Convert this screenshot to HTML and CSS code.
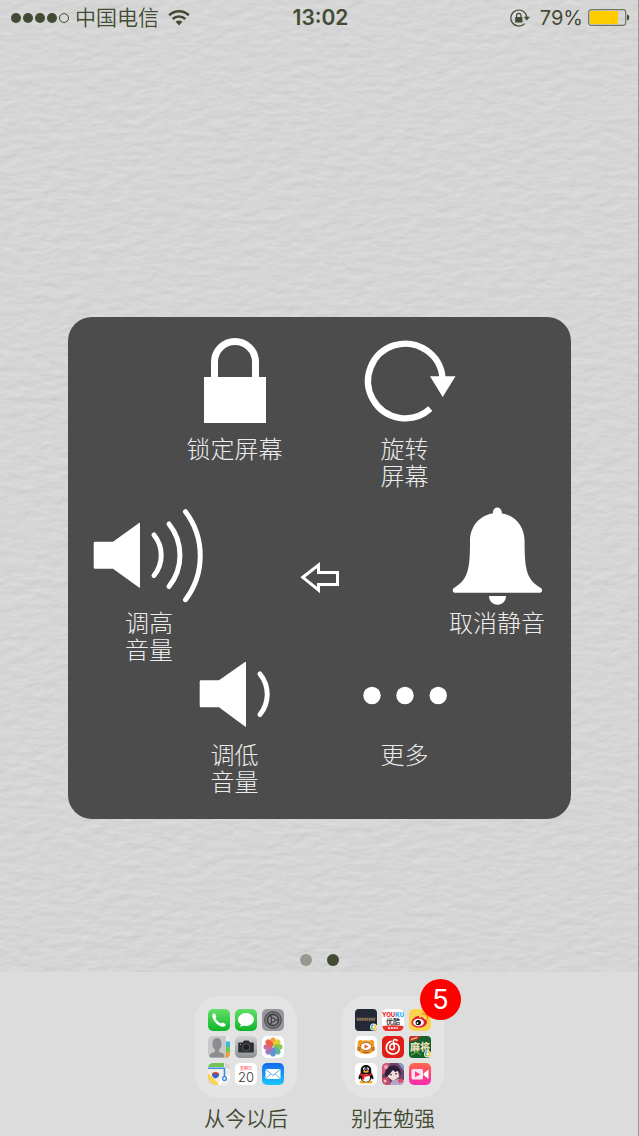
FILE: index.html
```html
<!DOCTYPE html>
<html lang="zh-CN">
<head>
    <meta charset="UTF-8">
    <meta name="viewport" content="width=device-width, initial-scale=1.0">
    <title>AssistiveTouch</title>
    <link rel="stylesheet" href="styles.css">
</head>
<body>
    <div class="screen">
        <!-- paper wallpaper -->
        <svg class="wallpaper" aria-hidden="true">
            <filter id="paper" x="0" y="0" width="100%" height="100%" color-interpolation-filters="sRGB">
                <feTurbulence type="fractalNoise" baseFrequency="0.06 0.13" numOctaves="3" seed="4"/>
                <feDiffuseLighting surfaceScale="0.22" diffuseConstant="1" lighting-color="#f9f9f9">
                    <feDistantLight azimuth="70" elevation="59"/>
                </feDiffuseLighting>
            </filter>
            <rect width="100%" height="100%" filter="url(#paper)"/>
        </svg>

        <header class="status-bar">
            <div class="status-left">
                <div class="signal">
                    <i></i><i></i><i></i><i></i><i class="empty"></i>
                </div>
                <span class="carrier">中国电信</span>
                <svg class="wifi" width="22" height="17" viewBox="0 0 22 17">
                    <g fill="none" stroke="#424b33" stroke-width="2.6">
                        <path d="M1.2 6.2a14 14 0 0 1 19.6 0"/>
                        <path d="M4.7 10a9 9 0 0 1 12.6 0"/>
                    </g>
                    <path d="M11 16.5l-3.4-3.7a4.8 4.8 0 0 1 6.8 0z" fill="#424b33"/>
                </svg>
            </div>
            <div class="time">13:02</div>
            <div class="status-right">
                <svg width="20" height="18" viewBox="0 0 20 18">
                    <path d="M14.6 14.6A8 8 0 1 1 16.8 8" fill="none" stroke="#424b33" stroke-width="1.2"/>
                    <path d="M13.8 7.8h6.2l-3.1 3.6z" fill="#424b33"/>
                    <rect x="5.2" y="8" width="7.2" height="5.4" rx=".5" fill="#424b33"/>
                    <path d="M6.6 8.2V6.6a2.2 2.2 0 0 1 4.4 0v1.6" fill="none" stroke="#424b33" stroke-width="1.2"/>
                </svg>
                <span class="percent">79%</span>
                <svg width="42" height="17" viewBox="0 0 42 17">
                    <rect x=".7" y=".7" width="37" height="15.6" rx="2.5" fill="none" stroke="#6f755f" stroke-width="1.2"/>
                    <rect x="2" y="2" width="28" height="13" fill="#fc0"/>
                    <path d="M39 5.5c3 0 3 6 0 6z" fill="#424b33"/>
                </svg>
            </div>
        </header>

        <main class="home"></main>

        <div class="page-dots"><i></i><i class="current"></i></div>

        <footer class="dock">
            <button class="folder">
                <span class="folder-box">
                    <!-- phone -->
                    <svg viewBox="0 0 22 22"><defs><linearGradient id="green" x2="0" y2="1"><stop stop-color="#62df68"/><stop offset="1" stop-color="#0fb52b"/></linearGradient></defs>
                        <rect width="22" height="22" rx="5" fill="url(#green)"/>
                        <path d="M4.3 6.2c0-1 1.3-2.3 2.1-1.8.9.7 1.6 1.8 1.9 2.7.2.8-1.1 1.2-.8 2 .9 2.3 2.8 4.2 5 5.2.9.4 1.3-1 2.2-.8 1 .3 2.4 1.2 2.9 2 .5.9-1.1 2.2-2.1 2.2C9.7 17.6 4.3 11.3 4.3 6.2z" fill="#fff"/>
                    </svg>
                    <!-- messages -->
                    <svg viewBox="0 0 22 22"><rect width="22" height="22" rx="5" fill="url(#green)"/>
                        <ellipse cx="11" cy="10.5" rx="8" ry="6.5" fill="#fff"/><path d="M6 14c.3 1.5-.4 2.9-1.4 3.6 2 0 3.6-.6 4.6-1.8z" fill="#fff"/>
                    </svg>
                    <!-- settings -->
                    <svg viewBox="0 0 22 22"><rect width="22" height="22" rx="5" fill="#96979b"/>
                        <circle cx="11" cy="11" r="9" fill="#77787b"/>
                        <circle cx="11" cy="11" r="8.2" fill="none" stroke="#444" stroke-width="1.2" stroke-dasharray="1 .5"/>
                        <circle cx="11" cy="11" r="5.5" fill="#8d8e91" stroke="#38393b" stroke-width="1.3"/>
                        <circle cx="11" cy="11" r="2" fill="#999" stroke="#333"/>
                        <path d="M13 11h4M9.9 9.2l-2-3.5M9.9 12.8l-2 3.5" stroke="#333" stroke-width="1.2"/>
                    </svg>
                    <!-- contacts -->
                    <svg viewBox="0 0 22 22"><rect width="22" height="22" rx="5" fill="#c9c9cb"/>
                        <path d="M18 0c2.5 0 4 2 4 5v1h-4z" fill="#eee"/><path d="M18 5.5h4V11h-4z" fill="#34bdd0"/><path d="M18 11h4v5.5h-4z" fill="#71c944"/><path d="M18 16.5h4c0 3-1.5 5.5-4 5.5z" fill="#f59a2e"/>
                        <path d="M1.5 20.5c0-3 2-3.5 5-4.6.7-.4.7-1.7 0-2.6C5 12 4.5 9.6 4.500 7.500 4.500 3.500 6.500 2 9 2s4.500 1.500 4.500 5.500c0 2.100-.5 4.500-2 5.800-.7.9-.7 2.200 0 2.600 3 1.100 5 1.600 5 4.600q0 1-1 1h-13q-1 0-1-1z" fill="#8d8d8f"/>
                    </svg>
                    <!-- camera -->
                    <svg viewBox="0 0 22 22"><defs><linearGradient id="steel" x2="0" y2="1"><stop stop-color="#d2d3d5"/><stop offset="1" stop-color="#8e9094"/></linearGradient></defs>
                        <rect width="22" height="22" rx="5" fill="url(#steel)"/>
                        <path d="M4 6.500h3.500L9 4.500h4.500L15 6.500h3q.8 0 .8.800v8.400q0 .8-.8.800H4q-.8 0-.8-.8V7.300q0-.8.800-.8z" fill="#2c2d30"/>
                        <circle cx="11.200" cy="11.300" r="3.600" fill="#202124" stroke="#666" stroke-width=".8"/>
                        <circle cx="5.500" cy="8.500" r=".5" fill="#fc0"/>
                    </svg>
                    <!-- photos -->
                    <svg viewBox="0 0 22 22"><rect width="22" height="22" rx="5" fill="#fff"/>
                        <g opacity=".9">
                            <rect x="8.200" y="1.500" width="5.600" height="8.800" rx="2.800" fill="#f79a1f"/>
                            <rect x="8.200" y="1.500" width="5.600" height="8.800" rx="2.800" fill="#d9cf26" transform="rotate(45 11 11)"/>
                            <rect x="8.200" y="1.500" width="5.600" height="8.800" rx="2.800" fill="#7fbf3a" transform="rotate(90 11 11)"/>
                            <rect x="8.200" y="1.500" width="5.600" height="8.800" rx="2.800" fill="#45b594" transform="rotate(135 11 11)"/>
                            <rect x="8.200" y="1.500" width="5.600" height="8.800" rx="2.800" fill="#4f8ace" transform="rotate(180 11 11)"/>
                            <rect x="8.200" y="1.500" width="5.600" height="8.800" rx="2.800" fill="#8570b8" transform="rotate(225 11 11)"/>
                            <rect x="8.200" y="1.500" width="5.600" height="8.800" rx="2.800" fill="#c75f98" transform="rotate(270 11 11)"/>
                            <rect x="8.200" y="1.500" width="5.600" height="8.800" rx="2.800" fill="#ec4f3b" transform="rotate(315 11 11)"/>
                        </g>
                    </svg>
                    <!-- maps -->
                    <svg viewBox="0 0 22 22"><defs><clipPath id="tile"><rect width="22" height="22" rx="5"/></clipPath></defs>
                        <g clip-path="url(#tile)">
                            <path d="M0 0h22v22H0z" fill="#f1eee3"/>
                            <path d="M0 0h16v4H0z" fill="#73c253"/><path d="M17 0h5v6l-5-2z" fill="#d9d5cd"/>
                            <path d="M0 14l10 8H0z" fill="#e8c9cf"/>
                            <path d="M-1 12l12 12" stroke="#fad648" stroke-width="4"/><path d="M11 23l3-7 9-3" stroke="#fff" stroke-width="2.500" fill="none"/>
                            <path d="M0 5.200h16.500V16" stroke="#3c8cf0" stroke-width="1.600" fill="none"/>
                            <path d="M4.500 10q3-1.500 6 0c1.500 3-1 5-3 5.500C5.500 15 3 13 4.500 10z" fill="#2c66c7"/><path d="M4.500 10q3-1.500 6 0l.3 1.200H4.200z" fill="#dc3d39"/>
                            <circle cx="16.500" cy="15.500" r="1.900" fill="#fff" stroke="#2c7ae6" stroke-width="1.200"/>
                        </g>
                    </svg>
                    <!-- calendar -->
                    <svg viewBox="0 0 22 22"><rect width="22" height="22" rx="5" fill="#fff"/>
                        <text x="11" y="6.500" class="cal-week">星期日</text><text x="11" y="18.500" class="cal-day">20</text>
                    </svg>
                    <!-- mail -->
                    <svg viewBox="0 0 22 22"><defs><linearGradient id="blue" x2="0" y2="1"><stop stop-color="#1569f0"/><stop offset="1" stop-color="#1cc5fb"/></linearGradient></defs>
                        <rect width="22" height="22" rx="5" fill="url(#blue)"/>
                        <rect x="3.500" y="6" width="15" height="10" rx="1" fill="#fff"/>
                        <path d="M4 6.500l7 6 7-6M4 15.500l5-4.700M18 15.500l-5-4.700" fill="none" stroke="#3095f4" stroke-width=".8"/>
                    </svg>
                </span>
                <span class="folder-name">从今以后</span>
            </button>

            <button class="folder">
                <span class="folder-box">
                    <!-- dark game tile -->
                    <svg viewBox="0 0 22 22"><rect width="22" height="22" rx="4" fill="#232a35"/>
                        <path d="M1.500 9.500h19M2 11h18" stroke="#8d7552" stroke-width="1.500" stroke-dasharray="2 .4"/>
                        <circle cx="18.500" cy="18" r="3.500" fill="#fff"/><path d="M16.500 18a2 2 0 0 1 2-2" stroke="#3aa7ee" stroke-width="1.600" fill="none"/><path d="M18.500 16a2 2 0 0 1 0 4" stroke="#f9c928" stroke-width="1.600" fill="none"/><path d="M18.500 20a2 2 0 0 1-2-2" stroke="#71c249" stroke-width="1.600" fill="none"/>
                    </svg>
                    <!-- youku -->
                    <svg viewBox="0 0 22 22"><rect width="22" height="22" rx="5" fill="#fff"/>
                        <text x="11" y="7.500" class="youku-latin"><tspan fill="#f0282d">YOU</tspan><tspan fill="#19a9ee">KU</tspan></text>
                        <text x="11" y="14.500" class="youku-han">优酷</text>
                        <path d="M.5 17q10.500-1.500 21 0c0 3-2 5-4.500 5H5C2.500 22 .5 20 .5 17z" fill="#e8322d"/>
                        <path d="M6 19h10" stroke="#fff" stroke-width="1.600" stroke-dasharray="2 .8"/>
                    </svg>
                    <!-- weibo -->
                    <svg viewBox="0 0 22 22"><rect width="22" height="22" rx="5" fill="#fcd34f"/>
                        <path d="M2.500 13.500C2.500 10.500 7 6.300 9.500 7c1 .3 1 1.200.8 2 2-1 4.700-1 4.700 1 2 .3 3 1.600 3 3.200 0 3-3.800 5.300-8 5.300s-7.500-2-7.500-5z" fill="#e3232c"/>
                        <ellipse cx="9.500" cy="13.500" rx="5.300" ry="3.800" fill="#fff"/><circle cx="9.300" cy="13.600" r="2.700" fill="#111"/><circle cx="8.500" cy="14" r=".9" fill="#fff"/>
                        <path d="M13 5c3.500-1 6.500 2 5.500 5.500" fill="none" stroke="#f08a1d" stroke-width="1.600"/>
                    </svg>
                    <!-- tiger player -->
                    <svg viewBox="0 0 22 22"><rect width="22" height="22" rx="5" fill="#fff"/>
                        <path d="M3 5.500q2-3 4.500-.8 3.500-1 7 0Q17.500 2.500 19 5.500c.5 1.500 0 2 .3 4 1.300 5-2.800 8.500-8.300 8.500s-9.600-3.500-8.300-8.500C3 7.500 2.500 7 3 5.500z" fill="#f59b22"/>
                        <ellipse cx="11" cy="10.500" rx="5.500" ry="4" fill="#fff" stroke="#8c4a17" stroke-width=".7"/>
                        <path d="M9.500 8.300l4 2.200-4 2.200z" fill="#e9642b"/><path d="M2 12h3M1.800 14h3.500M17 12h3M16.700 14h3.500M8 16q3 1.500 6 0" stroke="#7b3d12" stroke-width=".8" fill="none"/>
                    </svg>
                    <!-- netease music -->
                    <svg viewBox="0 0 22 22"><rect width="22" height="22" rx="5" fill="#df1f17"/>
                        <path d="M9 5.300C3.800 7.200 3 13.500 6.400 16.300c3.600 3 9.600 1.800 10.700-2.700.8-3.500-1.600-6.200-5-6.200-2.800 0-4.600 2-4.300 4.200.4 2.600 4.600 2.600 4.700-.1 0-1.200-1.500-5-1.200-6.500.3-1.700 2.400-2 3.700-.7" fill="none" stroke="#fff" stroke-width="1.700" stroke-linecap="round"/>
                    </svg>
                    <!-- mahjong -->
                    <svg viewBox="0 0 22 22"><rect width="22" height="22" rx="4" fill="#17602d"/>
                        <path d="M1 0h11L8 4 0 6V3z" fill="#c93524"/><path d="M2 3.500l6-2" stroke="#fff2a0"/>
                        <text x="11" y="14.500" class="mahjong">麻将</text>
                        <path d="M2 19l6-3 4 3" stroke="#4c9b36" stroke-width="1.500" fill="none"/>
                        <circle cx="18.500" cy="18" r="3.500" fill="#fff"/><path d="M16.500 18a2 2 0 0 1 2-2" stroke="#3aa7ee" stroke-width="1.600" fill="none"/><path d="M18.500 16a2 2 0 0 1 0 4" stroke="#f9c928" stroke-width="1.600" fill="none"/><path d="M18.500 20a2 2 0 0 1-2-2" stroke="#71c249" stroke-width="1.600" fill="none"/>
                    </svg>
                    <!-- qq -->
                    <svg viewBox="0 0 22 22"><rect width="22" height="22" rx="5" fill="#fff"/>
                        <ellipse cx="7.800" cy="19.200" rx="3.300" ry="1.400" fill="#f8ab1c"/><ellipse cx="14.200" cy="19.200" rx="3.300" ry="1.400" fill="#f8ab1c"/>
                        <path d="M11 2c3.600 0 5.300 2.500 5.300 6v2c1.500 2 2.600 4 2 6-.4.700-1.300 0-1.800-1-.7 2.500-2.500 4.200-5.500 4.200S6.200 17.500 5.500 15c-.5 1-1.400 1.700-1.800 1-.6-2 .5-4 2-6V8c0-3.500 1.700-6 5.300-6z" fill="#111"/>
                        <ellipse cx="11" cy="15" rx="4" ry="3.700" fill="#fff"/><ellipse cx="9.300" cy="6" rx="1.200" ry="1.700" fill="#fff"/><ellipse cx="12.700" cy="6" rx="1.200" ry="1.700" fill="#fff"/>
                        <circle cx="9.600" cy="6.200" r=".6"/><circle cx="12.400" cy="6.200" r=".6"/>
                        <ellipse cx="11" cy="8.800" rx="3" ry="1" fill="#f8ab1c"/>
                        <path d="M5.500 10q5.500 3 11 0l.4 2q-4 2-7.500 1.800V16.500H7V13.300q-1.200-.4-2-1.300z" fill="#e61d26"/>
                    </svg>
                    <!-- anime game -->
                    <svg viewBox="0 0 22 22"><g clip-path="url(#tile)"><path d="M0 0h22v22H0z" fill="#6b4668"/>
                        <path d="M0 0h8L4 9l-4 3z" fill="#d5587b"/><path d="M16 0h6v8z" fill="#8c9bc4"/>
                        <path d="M6 8q5-5 10-1l1 7-6 4-5-4z" fill="#f6dcd8"/><path d="M3 14C2 6 7 2 12 2.500c5 .5 7 4.500 7 9.500l-3-4-3 1-2-2-4 5z" fill="#2c2038"/>
                        <path d="M0 15l6-1 3 8H0z" fill="#c94a6c"/><path d="M9 19l6-3 7 1v5H8z" fill="#b6a6cc"/>
                        <circle cx="4" cy="4" r="2" fill="#f6a4b8"/><circle cx="3" cy="18" r="1.500" fill="#f3bccb"/><path d="M8 12l2-.5M13 11l2-.3" stroke="#47243f" stroke-width="1.200"/>
                        <path d="M16 17l4-2 1 4-4 1z" fill="#e6455a"/></g>
                    </svg>
                    <!-- video recorder -->
                    <svg viewBox="0 0 22 22"><defs><linearGradient id="pink" x2="0" y2="1"><stop stop-color="#ff6a4a"/><stop offset=".5" stop-color="#ff4078"/><stop offset="1" stop-color="#f82bb0"/></linearGradient></defs>
                        <rect width="22" height="22" rx="5" fill="url(#pink)"/>
                        <rect x="2.500" y="6" width="11.500" height="10.500" rx="1.500" fill="#ffe3ee"/><path d="M14.500 10.500l5-4v9.500l-5-4z" fill="#fff"/>
                        <path d="M6 8.300l5.500 3-5.500 3z" fill="#ff4180"/>
                    </svg>
                    <span class="badge">5</span>
                </span>
                <span class="folder-name">别在勉强</span>
            </button>
        </footer>

        <div class="overlay">
            <div class="panel">
                <div class="row row-top">
                    <button class="item">
                        <svg width="100" height="100" viewBox="0 0 100 100">
                            <rect x="19" y="41" width="62" height="46" fill="#fff"/>
                            <path d="M29.500 42V26a20.500 20.500 0 0 1 41 0v16" fill="none" stroke="#fff" stroke-width="7"/>
                        </svg>
                        <span>锁定屏幕</span>
                    </button>
                    <button class="item">
                        <svg width="100" height="100" viewBox="0 0 100 100">
                            <path d="M75.300 72.700A37.300 37.300 0 1 1 87.500 42" fill="none" stroke="#fff" stroke-width="6.300"/>
                            <path d="M75 40.200h25.500L87.700 61z" fill="#fff"/>
                        </svg>
                        <span>旋转<br>屏幕</span>
                    </button>
                </div>
                <div class="row row-middle">
                    <button class="item">
                        <svg width="120" height="104" viewBox="0 0 120 104">
                            <path d="M6 35.700h18L50 17q1-.5 1 .5v63.500q0 1-1 .5L24 62.700H6q-1.300 0-1.300-1.300V37q0-1.300 1.300-1.300z" fill="#fff"/>
                            <g fill="none" stroke="#fff" stroke-width="5" stroke-linecap="round">
                                <path d="M65 29a32 32 0 0 1 0 40.500"/>
                                <path d="M80 18a50 50 0 0 1 0 62.500"/>
                                <path d="M96.500 5.700a73 73 0 0 1 0 88"/>
                            </g>
                        </svg>
                        <span>调高<br>音量</span>
                    </button>
                    <button class="back" aria-label="返回">
                        <svg width="40" height="34" viewBox="0 0 40 34">
                            <path d="M2.800 16.300L18.500 4v7.500h19v12h-19V29z" fill="none" stroke="#fff" stroke-width="3"/>
                        </svg>
                    </button>
                    <button class="item item-right">
                        <svg width="104" height="104" viewBox="0 0 104 104">
                            <g fill="#fff">
                                <circle cx="52.300" cy="6" r="4.400"/>
                                <path d="M48 6h8.600v6H48z"/>
                                <path d="M52.300 7C68 7 79.600 19 79.600 35c0 25 1 38 15.400 46.500 2 1.200 2 2 2 3 0 1.500-1.200 2.300-3 2.300H10.700c-1.800 0-3-.8-3-2.300 0-1 0-1.800 2-3C24 73 25 60 25 35 25 19 36.700 7 52.300 7z"/>
                                <path d="M44 90h17c0 5-3.700 8.700-8.500 8.700S44 95 44 90z"/>
                            </g>
                        </svg>
                        <span>取消静音</span>
                    </button>
                </div>
                <div class="row row-bottom">
                    <button class="item">
                        <svg width="100" height="82" viewBox="0 0 100 82">
                            <path d="M16 20.200h18L60 2q1-.5 1 .5V66q0 1-1 .5L34 47.300H16q-1.300 0-1.300-1.300V21.500q0-1.300 1.300-1.300z" fill="#fff"/>
                            <path d="M75 14a32 32 0 0 1 0 40.500" fill="none" stroke="#fff" stroke-width="5" stroke-linecap="round"/>
                        </svg>
                        <span>调低<br>音量</span>
                    </button>
                    <button class="item">
                        <svg width="100" height="82" viewBox="0 0 100 82">
                            <g fill="#fff"><circle cx="17" cy="35.500" r="8.700"/><circle cx="50" cy="35.500" r="8.700"/><circle cx="83.200" cy="35.500" r="8.700"/></g>
                        </svg>
                        <span>更多</span>
                    </button>
                </div>
            </div>
        </div>
    </div>
</body>
</html>
```

FILE: styles.css
```css
* {
    box-sizing: border-box;
}
body {
    margin: 0;
    font-family: Inter, "Noto Sans CJK SC", sans-serif;
    background: #d5d5d5;
    color: #424b33;
}
button {
    padding: 0;
    border: none;
    background: none;
    color: inherit;
    font: inherit;
    cursor: pointer;
}
svg {
    display: block;
}
.screen {
    position: relative;
    display: flex;
    flex-direction: column;
    min-height: 100vh;
}
.screen::after {
    content: "";
    position: absolute;
    inset: 0 0 0 auto;
    width: 1px;
    background: #999;
}
.wallpaper {
    position: absolute;
    inset: 0;
    width: 100%;
    height: 100%;
    z-index: -1;
}

/* status bar */
.status-bar {
    display: grid;
    grid-template-columns: 1fr auto 1fr;
    align-items: center;
    height: 35px;
    padding: 0 9px 0 11px;
    font-size: 21px;
    line-height: 24px;
}
.status-left,
.status-right {
    display: flex;
    align-items: center;
}
.status-right {
    justify-content: flex-end;
    gap: 5px;
}
.signal {
    display: flex;
    gap: 2px;
    margin-right: 6px;
}
.signal i {
    width: 10px;
    height: 10px;
    border-radius: 50%;
    background: #424b33;
}
.signal .empty {
    background: none;
    border: 1px solid #424b33;
}
.carrier {
    font-weight: 350;
}
.wifi {
    margin-left: 9px;
}
.time {
    font-weight: 600;
}
.percent {
    margin-left: 5px;
    font-size: 20px;
}

.home {
    flex: 1;
}
.page-dots {
    display: flex;
    justify-content: center;
    gap: 15px;
    padding-bottom: 6px;
}
.page-dots i {
    width: 12px;
    height: 12px;
    border-radius: 50%;
    background: #969a8e;
}
.page-dots .current {
    background: #424b33;
}

/* dock */
.dock {
    display: flex;
    justify-content: center;
    gap: 45px;
    padding: 24px 0 2px;
    background: #dcdcdc;
}
.folder-box {
    position: relative;
    display: grid;
    grid-template-columns: repeat(3, 22px);
    gap: 5px;
    padding: 13px;
    border-radius: 24px;
    background: #e3e3e3;
}
.folder-box svg {
    width: 22px;
    height: 22px;
}
.folder-name {
    display: block;
    margin-top: 6px;
    font-size: 21px;
    font-weight: 350;
    line-height: 30px;
}
.badge {
    position: absolute;
    top: -17px;
    right: -17px;
    width: 41px;
    height: 41px;
    border-radius: 50%;
    background: #fe0000;
    color: #fff;
    font-size: 27px;
    line-height: 41px;
}
.cal-week,
.cal-day,
.youku-latin,
.youku-han,
.mahjong {
    text-anchor: middle;
}
.cal-week {
    font-size: 4px;
    fill: #f33;
}
.cal-day {
    font-size: 13px;
    font-weight: 300;
    fill: #333;
}
.youku-latin {
    font-size: 6px;
    font-weight: 800;
}
.youku-han {
    font-size: 7px;
    font-weight: 500;
    fill: #222;
}
.mahjong {
    font-size: 10px;
    font-weight: 900;
    fill: #e6dfb8;
}

/* assistive panel */
.overlay {
    position: absolute;
    inset: 0;
    display: flex;
    align-items: center;
    justify-content: center;
    padding: 0 68px;
}
.panel {
    flex: 1;
    max-width: 520px;
    padding: 19px 0 23px;
    border-radius: 24px;
    background: #4c4c4c;
    color: #ececec;
}
.row {
    display: grid;
    justify-content: center;
    align-items: start;
    grid-template-columns: 170px 170px;
}
.row-middle {
    grid-template-columns: 162px 1fr 162px;
    margin: 16px 0 -4px;
}
.item {
    display: flex;
    flex-direction: column;
    align-items: center;
    font-size: 24px;
    font-weight: 300;
    line-height: 27px;
}
.item-right {
    padding-left: 14px;
}
.item svg {
    overflow: visible;
}
.back {
    justify-self: center;
    align-self: center;
    padding-bottom: 14px;
}
```
